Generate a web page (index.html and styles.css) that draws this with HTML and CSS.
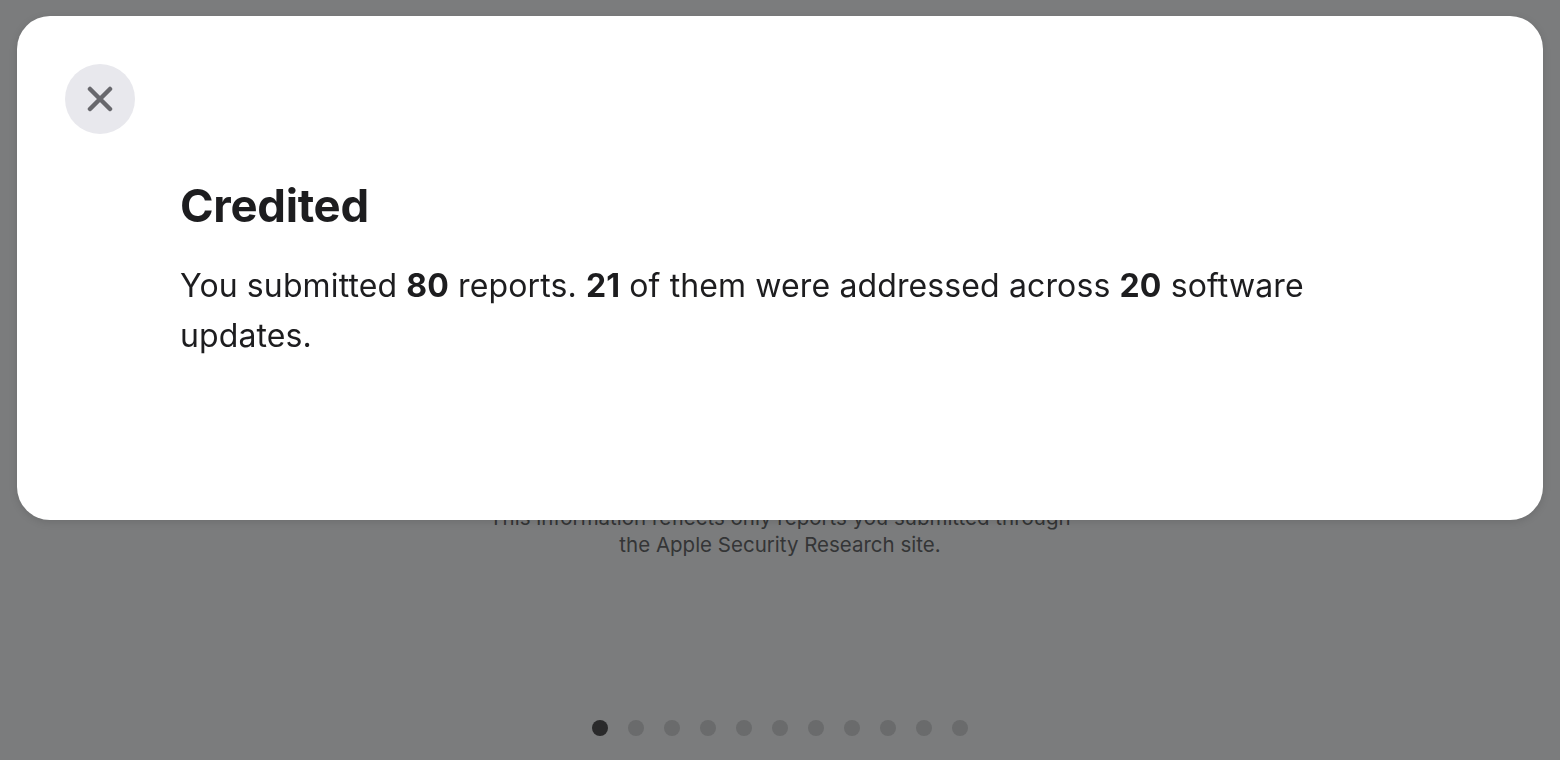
FILE: index.html
```html
<!DOCTYPE html>
<html lang="en">
<head>
<meta charset="utf-8">
<title>Credited</title>
<link rel="stylesheet" href="styles.css">
</head>
<body>
<main class="page">
  <p class="note">This information reflects only reports you submitted through<br>the Apple Security Research site.</p>
  <div class="dots">
    <span class="dot active"></span><span class="dot"></span><span class="dot"></span><span class="dot"></span><span class="dot"></span><span class="dot"></span><span class="dot"></span><span class="dot"></span><span class="dot"></span><span class="dot"></span><span class="dot"></span>
  </div>
</main>
<div class="modal" role="dialog">
  <button class="close" aria-label="Close">
    <svg width="26" height="26" viewBox="0 0 26 26"><path d="M3 3L23 23M23 3L3 23" stroke="#68686d" stroke-width="4.5" stroke-linecap="round" fill="none"/></svg>
  </button>
  <div class="content">
    <h1 class="title">Credited</h1>
    <p class="text">You submitted <b>80</b> reports. <b>21</b> of them were addressed across <b>20</b> software updates.</p>
  </div>
</div>
</body>
</html>
```

FILE: styles.css
```css
html, body {
  margin: 0;
  padding: 0;
}
body {
  width: 1560px;
  height: 760px;
  overflow: hidden;
  background: #7b7c7d;
  font-family: Inter, "Noto Sans", sans-serif;
  color: #1d1d1f;
}
.page {
  height: 760px;
  display: flex;
  flex-direction: column;
  align-items: center;
}
.note {
  margin: 504px 0 0;
  text-align: center;
  font-size: 20.5px;
  line-height: 27px;
  color: #343536;
}
.dots {
  margin-top: 162px;
  display: flex;
  gap: 20px;
}
.dot {
  width: 16px;
  height: 16px;
  border-radius: 50%;
  background: #6a6b6c;
}
.dot.active {
  background: #2a2a2b;
}
.modal {
  position: fixed;
  left: 17px;
  top: 16px;
  width: 1526px;
  height: 504px;
  background: #fff;
  border-radius: 33px;
  box-shadow: 0 2px 8px rgba(0,0,0,0.12);
  box-sizing: border-box;
  padding: 48px 48px 0 48px;
}
.close {
  width: 70px;
  height: 70px;
  border-radius: 50%;
  border: 0;
  background: #e8e8ed;
  display: flex;
  align-items: center;
  justify-content: center;
  padding: 0;
  cursor: pointer;
}
.content {
  padding: 0 115px;
}
.title {
  margin: 44px 0 0;
  font-size: 45.5px;
  line-height: 56px;
  font-weight: 700;
  letter-spacing: -0.3px;
}
.text {
  margin: 27px 0 0;
  font-size: 32px;
  line-height: 50px;
  font-weight: 400;
  letter-spacing: 0.12px;
  max-width: 1140px;
}
.text b {
  font-weight: 700;
}
```
